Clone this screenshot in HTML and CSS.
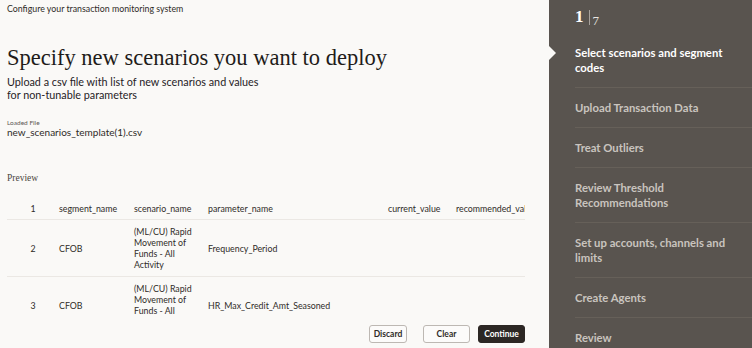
FILE: index.html
```html
<!DOCTYPE html>
<html>

<head>
  <title>Configure your transaction monitoring system</title>
  <link rel="stylesheet" href="styles.css">
</head>

<body>
  <div class="page">
    <div class="main">
      <div class="top-title">Configure your transaction monitoring system</div>

      <h1 class="page-title">Specify new scenarios you want to deploy</h1>
      <p class="page-sub">Upload a csv file with list of new scenarios and values<br>for non-tunable parameters</p>

      <div class="file-label">Loaded File</div>
      <div class="file-name">new_scenarios_template(1).csv</div>

      <div class="preview-label">Preview</div>

      <div class="table-wrap">
        <table class="preview-table">
          <colgroup>
            <col class="c-idx">
            <col class="c-seg">
            <col class="c-scen">
            <col class="c-param">
            <col class="c-cur">
            <col class="c-rec">
          </colgroup>
          <tr class="head-row">
            <td class="idx">1</td>
            <td>segment_name</td>
            <td>scenario_name</td>
            <td>parameter_name</td>
            <td>current_value</td>
            <td>recommended_value</td>
          </tr>
          <tr>
            <td class="idx">2</td>
            <td>CFOB</td>
            <td>(ML/CU) Rapid Movement of Funds - All Activity</td>
            <td>Frequency_Period</td>
            <td></td>
            <td></td>
          </tr>
          <tr>
            <td class="idx">3</td>
            <td>CFOB</td>
            <td>(ML/CU) Rapid Movement of Funds - All Activity</td>
            <td>HR_Max_Credit_Amt_Seasoned</td>
            <td></td>
            <td></td>
          </tr>
        </table>
      </div>

      <div class="actions">
        <button class="btn btn-discard">Discard</button>
        <button class="btn">Clear</button>
        <button class="btn btn-primary">Continue</button>
      </div>
    </div>

    <div class="sidebar">
      <div class="step-count">
        <span class="step-now">1</span>
        <span class="step-bar"></span>
        <span class="step-total">7</span>
      </div>
      <ul class="steps">
        <li class="step active">Select scenarios and segment codes</li>
        <li class="step">Upload Transaction Data</li>
        <li class="step">Treat Outliers</li>
        <li class="step">Review Threshold Recommendations</li>
        <li class="step">Set up accounts, channels and limits</li>
        <li class="step">Create Agents</li>
        <li class="step">Review</li>
      </ul>
    </div>
  </div>
</body>

</html>
```

FILE: styles.css
```css
body {
  margin: 0;
  font-family: Lato, "Noto Sans", sans-serif;
  background-color: #faf9f7;
  color: #2f2b28;
  overflow: hidden;
}

.page {
  display: flex;
  height: 348px;
}

.main {
  width: 549px;
  padding: 0 0 0 7px;
  box-sizing: border-box;
}

.top-title {
  font-size: 8.8px;
  line-height: 12px;
  margin-top: 3px;
}

.page-title {
  font-family: "Liberation Serif", serif;
  font-weight: normal;
  font-size: 22.5px;
  line-height: 26px;
  margin: 30px 0 0 0;
  color: #1f1c1a;
}

.page-sub {
  font-size: 10.8px;
  line-height: 13px;
  margin: 4px 0 0 0;
  color: #26221f;
}

.file-label {
  font-size: 6.5px;
  line-height: 8px;
  color: #5c5854;
  margin-top: 18px;
}

.file-name {
  font-size: 10px;
  line-height: 11px;
  margin-top: 0;
}

.preview-label {
  font-family: "Liberation Serif", serif;
  font-size: 9.5px;
  line-height: 12px;
  color: #4a4541;
  margin-top: 34px;
}

.table-wrap {
  width: 518px;
  height: 120px;
  margin-top: 13px;
  overflow: hidden;
}

.preview-table {
  table-layout: fixed;
  border-collapse: collapse;
  width: 570px;
  font-size: 8.8px;
  line-height: 11px;
}

.c-idx { width: 52px; }
.c-seg { width: 75px; }
.c-scen { width: 74px; }
.c-param { width: 180px; }
.c-cur { width: 68px; }
.c-rec { width: 121px; }

.preview-table td {
  padding: 6px 12px 6px 0;
  vertical-align: middle;
  border-bottom: 1px solid #ebe8e4;
}

.preview-table .head-row td {
  height: 11px;
  padding-top: 6px;
  padding-bottom: 5px;
  white-space: nowrap;
}

.preview-table td.idx {
  text-align: center;
  padding-right: 0;
}

.actions {
  display: flex;
  justify-content: flex-end;
  gap: 8px;
  width: 518px;
  margin-top: 8px;
}

.btn {
  height: 18px;
  padding: 0;
  font-family: Lato, "Noto Sans", sans-serif;
  font-size: 8.5px;
  font-weight: bold;
  color: #2f2b28;
  background-color: #fcfbfa;
  border: 1px solid #bdb8b3;
  border-radius: 3px;
  width: 47px;
}

.btn-discard {
  width: 38px;
  margin-right: 8px;
}

.btn-primary {
  background-color: #2c2724;
  border-color: #2c2724;
  color: #fff;
}

.sidebar {
  position: relative;
  flex: 1;
  background-color: #59544f;
  padding-left: 26px;
}

.step-count {
  display: flex;
  align-items: flex-start;
  height: 33px;
  padding-top: 8px;
  box-sizing: border-box;
  font-family: "Liberation Serif", serif;
  color: #fff;
}

.step-now {
  font-size: 17px;
  line-height: 17px;
  font-weight: bold;
}

.step-bar {
  width: 1px;
  height: 15px;
  background-color: #a8a29c;
  margin: 2px 3px 0 5px;
}

.step-total {
  font-size: 13px;
  line-height: 13px;
  margin-top: 6px;
  color: #e9e6e2;
}

.steps {
  list-style: none;
  margin: 0;
  padding: 0;
}

.step {
  padding: 12px 10px 12px 0;
  font-size: 11.3px;
  line-height: 15px;
  font-weight: bold;
  color: #c9c4bf;
  border-bottom: 1px solid #666059;
}

.step.active {
  color: #fff;
  position: relative;
}

.step.active::before {
  content: "";
  position: absolute;
  left: -26px;
  top: 13px;
  border-top: 7px solid transparent;
  border-bottom: 7px solid transparent;
  border-left: 7px solid #faf9f7;
}
```
